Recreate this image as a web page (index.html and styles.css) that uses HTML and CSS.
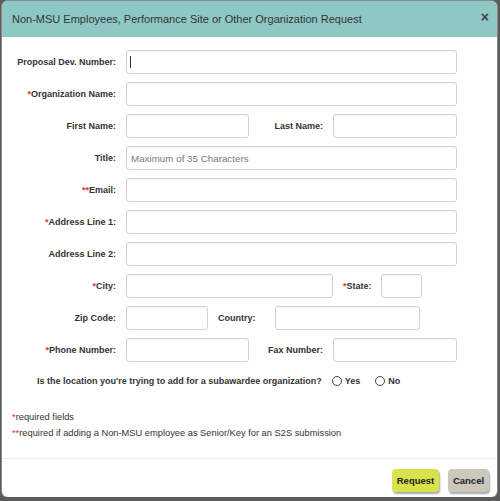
FILE: index.html
```html
<!DOCTYPE html>
<html lang="en">
<head>
    <meta charset="UTF-8">
    <meta name="viewport" content="width=device-width, initial-scale=1.0">
    <title>Organization Request</title>
    <link rel="stylesheet" href="styles.css">
</head>
<body>
<section class="modal">
    <header class="modal_head">
        <h2>Non-MSU Employees, Performance Site or Other Organization Request</h2>
        <span class="close">&times;</span>
    </header>

    <form class="modal_body" id="orgForm">
        <div class="row">
            <label class="lbl" for="devno">Proposal Dev. Number:</label>
            <span class="caret_wrap">
                <input class="fld w_full" type="text" id="devno">
                <span class="caret"></span>
            </span>
        </div>
        <div class="row">
            <label class="lbl" for="orgname"><span class="req">*</span>Organization Name:</label>
            <input class="fld w_full" type="text" id="orgname">
        </div>
        <div class="row">
            <label class="lbl" for="first">First Name:</label>
            <input class="fld w_half" type="text" id="first">
            <label class="lbl2" for="last">Last Name:</label>
            <input class="fld w_half2" type="text" id="last">
        </div>
        <div class="row">
            <label class="lbl" for="title">Title:</label>
            <input class="fld w_full" type="text" id="title" placeholder="Maximum of 35 Characters">
        </div>
        <div class="row">
            <label class="lbl" for="email"><span class="req">**</span>Email:</label>
            <input class="fld w_full" type="text" id="email">
        </div>
        <div class="row">
            <label class="lbl" for="addr1"><span class="req">*</span>Address Line 1:</label>
            <input class="fld w_full" type="text" id="addr1">
        </div>
        <div class="row">
            <label class="lbl" for="addr2">Address Line 2:</label>
            <input class="fld w_full" type="text" id="addr2">
        </div>
        <div class="row">
            <label class="lbl" for="city"><span class="req">*</span>City:</label>
            <input class="fld w_city" type="text" id="city">
            <label class="lbl_state" for="state"><span class="req">*</span>State:</label>
            <input class="fld w_state" type="text" id="state">
        </div>
        <div class="row">
            <label class="lbl" for="zip">Zip Code:</label>
            <input class="fld w_zip" type="text" id="zip">
            <label class="lbl_country" for="country">Country:</label>
            <input class="fld w_country" type="text" id="country">
        </div>
        <div class="row">
            <label class="lbl" for="phone"><span class="req">*</span>Phone Number:</label>
            <input class="fld w_half" type="text" id="phone">
            <label class="lbl2" for="fax">Fax Number:</label>
            <input class="fld w_half2" type="text" id="fax">
        </div>

        <div class="radio_row">
            <span class="question">Is the location you're trying to add for a subawardee organization?</span>
            <label class="opt"><input type="radio" name="subaward" value="yes">Yes</label>
            <label class="opt"><input type="radio" name="subaward" value="no">No</label>
        </div>

        <p class="note first_note"><span class="req">*</span>required fields</p>
        <p class="note"><span class="req">**</span>required if adding a Non-MSU employee as Senior/Key for an S2S submission</p>
    </form>

    <footer class="modal_foot">
        <button class="btn btn_request" type="submit" form="orgForm">Request</button>
        <button class="btn btn_cancel" type="button">Cancel</button>
    </footer>
</section>
</body>
</html>
```

FILE: styles.css
```css
body{
    margin: 0;
    background: #5b5b5b;
    font-family: "Liberation Sans", Arial, sans-serif;
    color: #333;
}
.modal{
    width: 495px;
    height: 496px;
    margin: 1px 0 0 2px;
    background: #fff;
    border-radius: 6px;
    box-shadow: 0 0 0 1px #8a8a8a;
    display: flex;
    flex-direction: column;
    overflow: hidden;
}
.modal_head{
    height: 36px;
    background: #8dc8c5;
    display: flex;
    align-items: center;
    justify-content: space-between;
    padding: 0 10px;
    flex-shrink: 0;
}
.modal_head h2{
    margin: 0;
    font-size: 11px;
    font-weight: normal;
    color: #333;
}
.close{
    font-size: 14px;
    font-weight: bold;
    color: #444;
    margin-top: -5px;
    margin-right: -2px;
}
.modal_body{
    flex: 1;
    padding: 13px 0 0 0;
    border-bottom: 1px solid #ececec;
}
.row{
    display: flex;
    align-items: center;
    gap: 10px;
    height: 24px;
    margin-bottom: 8px;
}
.lbl, .lbl2, .lbl_state, .lbl_country{
    font-size: 9px;
    font-weight: bold;
    color: #333;
    text-align: right;
    flex-shrink: 0;
}
.lbl{ width: 114px; }
.lbl2{ width: 64px; }
.lbl_state{ width: 28px; }
.lbl_country{ width: 47px; text-align: left; }
.req{
    color: #e2332f;
}
.fld{
    box-sizing: border-box;
    height: 24px;
    border: 1px solid #d3d3d3;
    border-radius: 3px;
    box-shadow: inset 0 1px 1px rgba(0, 0, 0, 0.04);
    padding: 0 4px;
    font-family: "Liberation Sans", Arial, sans-serif;
    font-size: 9.8px;
    color: #333;
    margin: 0;
    outline: none;
}
.fld::placeholder{
    color: #7a7a7a;
}
.w_full{ width: 331px; }
.w_half{ width: 123px; }
.w_half2{ width: 124px; }
.w_city{ width: 207px; }
.w_state{ width: 41px; }
.w_zip{ width: 82px; }
.w_country{ width: 145px; }
.caret_wrap{
    position: relative;
    display: flex;
}
.caret{
    position: absolute;
    left: 4px;
    top: 6px;
    width: 1px;
    height: 12px;
    background: #333;
}
.radio_row{
    display: flex;
    align-items: center;
    height: 22px;
    padding-left: 35px;
    font-size: 9px;
    font-weight: bold;
}
.question{
    margin-right: 10px;
}
.opt{
    display: flex;
    align-items: center;
    gap: 3px;
    margin-right: 15px;
}
.opt input{
    appearance: none;
    width: 10px;
    height: 10px;
    margin: 0;
    border: 1px solid #444;
    border-radius: 50%;
    background: #fff;
}
.note{
    margin: 0;
    padding-left: 10px;
    font-size: 9.3px;
    line-height: 16px;
    color: #333;
}
.first_note{
    margin-top: 17px;
}
.modal_foot{
    display: flex;
    justify-content: flex-end;
    gap: 9px;
    padding: 10px 8px 0 0;
    height: 38px;
    box-sizing: border-box;
    flex-shrink: 0;
}
.btn{
    height: 23px;
    border: none;
    border-radius: 4px;
    padding: 0;
    font-family: "Liberation Sans", Arial, sans-serif;
    font-size: 9.5px;
    font-weight: bold;
    color: #222;
    box-shadow: 1px 2px 2px rgba(0, 0, 0, 0.35);
    cursor: pointer;
}
.btn_request{
    width: 47px;
    background: #d8e34c;
}
.btn_cancel{
    width: 41px;
    background: #cac8bc;
}
```
